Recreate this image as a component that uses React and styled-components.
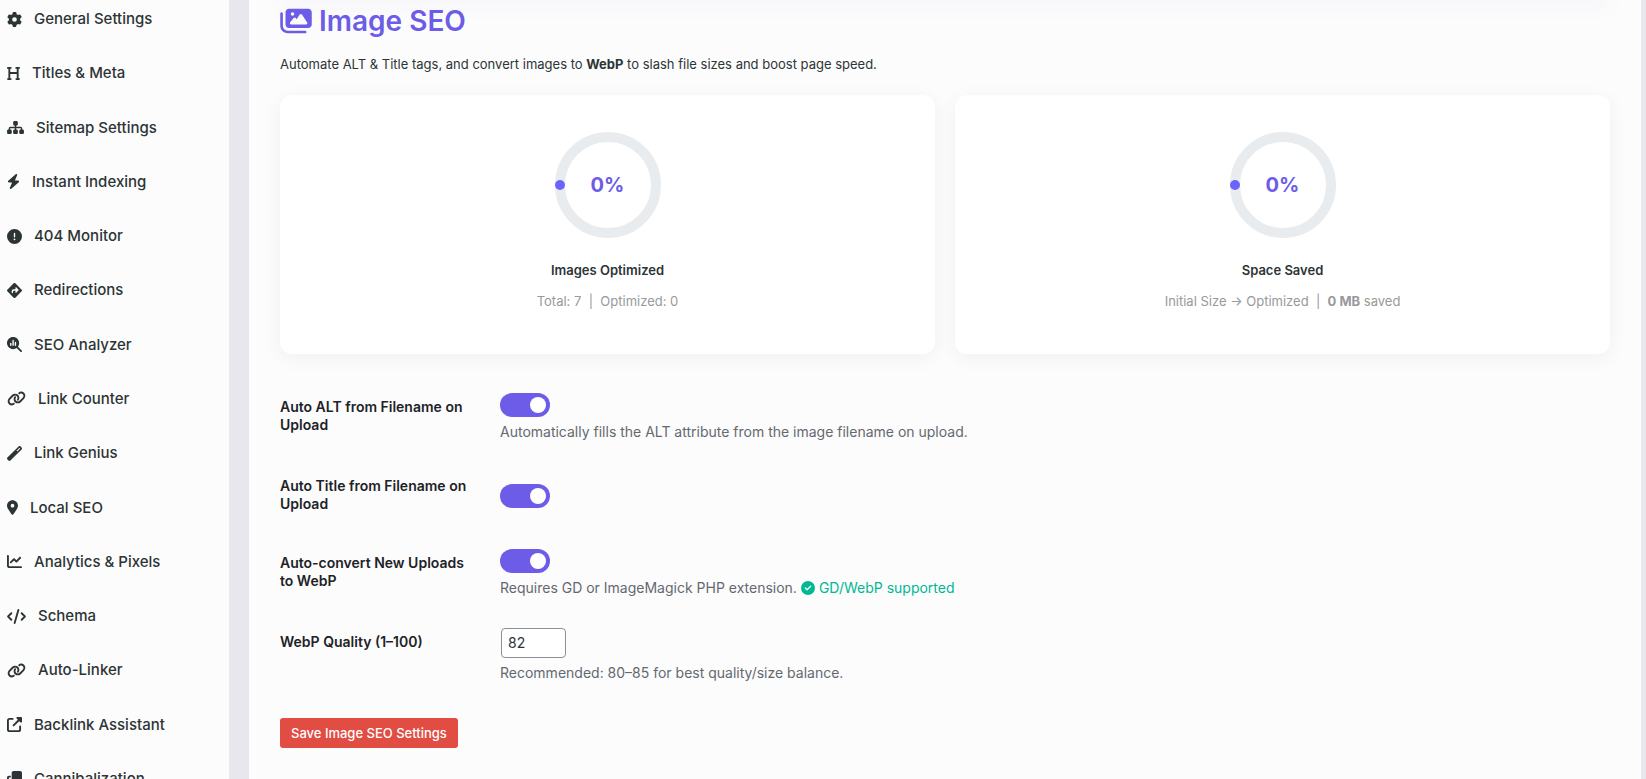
import { useState } from "react";
import styled, { createGlobalStyle } from "styled-components";
import {
    FaBolt,
    FaChartLine,
    FaCircleCheck,
    FaCircleExclamation,
    FaClone,
    FaCode,
    FaDiamondTurnRight,
    FaGear,
    FaHeading,
    FaImages,
    FaLink,
    FaLocationDot,
    FaMagnifyingGlassChart,
    FaSitemap,
    FaUpRightFromSquare,
    FaWandMagic,
} from "react-icons/fa6";

const GlobalStyle = createGlobalStyle`
    *, *::before, *::after {
        box-sizing: border-box;
    }

    body {
        margin: 0;
        background-color: #e8e7ed;
        color: #2d3436;
        font-family: Inter, "Liberation Sans", sans-serif;
        font-size: 13px;
        line-height: 20px;
        -webkit-font-smoothing: antialiased;
    }
`;

const Viewport = styled.div`
    height: 100vh;
    overflow: hidden;
`;

const Page = styled.div`
    display: flex;
    gap: 20px;
    margin-top: -8px;
    padding-right: 5px;
`;

const Sidebar = styled.nav`
    flex: 0 0 229px;
    background-color: #fcfcfc;
`;

const NavList = styled.ul`
    display: flex;
    flex-direction: column;
    min-height: 814px;
    margin: 0;
    padding: 0;
    list-style: none;
`;

const NavItem = styled.li`
    flex: 1;
    display: flex;
`;

const NavLink = styled.a`
    flex: 1;
    display: flex;
    align-items: center;
    gap: 12px;
    padding: 0 7px;
    color: #2d3436;
    font-size: 15px;
    font-weight: 500;
    text-decoration: none;

    svg {
        width: ${({ $iconWidth }) => $iconWidth || 15}px;
        height: 15px;
    }
`;

const Main = styled.main`
    flex: 1;
    min-width: 0;
    padding: 0 31px;
    background-color: #fcfcfc;
`;

const TopPanel = styled.div`
    height: 8px;
    margin-bottom: 3px;
    background-color: #fff;
    box-shadow: 0 4px 20px rgba(108, 92, 231, 0.08);
`;

const Title = styled.h1`
    display: flex;
    align-items: center;
    gap: 7px;
    margin: 0 0 15px;
    color: #6c5ce7;
    font-size: 28px;
    font-weight: 600;
    line-height: 36px;

    svg {
        width: 32px;
        height: 28px;
    }
`;

const Intro = styled.p`
    margin: 0 0 21px;
`;

const Cards = styled.div`
    display: grid;
    grid-template-columns: 1fr 1fr;
    gap: 20px;
    margin-bottom: 24px;
`;

const Card = styled.section`
    display: flex;
    flex-direction: column;
    align-items: center;
    padding: 30px;
    border-radius: 12px;
    background-color: #fff;
    box-shadow: 0 4px 20px rgba(0, 0, 0, 0.05);

    h2 {
        margin: 15px 0 11px;
        font-size: 13px;
        font-weight: 600;
    }

    p {
        margin: 0 0 13px;
        color: #999;
        white-space: pre;
    }
`;

const RingBox = styled.div`
    display: grid;
    place-items: center;
    width: 120px;
    height: 120px;

    > * {
        grid-area: 1 / 1;
    }
`;

const RingValue = styled.span`
    color: #6c5ce7;
    font-size: 20px;
    font-weight: 700;
`;

const SettingRow = styled.div`
    display: grid;
    grid-template-columns: 200px 1fr;
    gap: 20px;
    min-height: 77px;
`;

const SettingLabel = styled.label`
    padding: 20px 0;
    color: #1d2327;
    font-size: 14px;
    font-weight: 600;
    line-height: 18px;
`;

const Field = styled.div`
    align-self: center;
    padding: 15px 0;
`;

const Hint = styled.p`
    display: flex;
    align-items: center;
    gap: 4px;
    margin: 4px 0 0;
    color: #646970;
    font-size: 14px;
    line-height: 21px;
`;

const Supported = styled.span`
    display: flex;
    align-items: center;
    gap: 4px;
    color: #00b894;
`;

const Toggle = styled.input.attrs({ type: "checkbox", role: "switch" })`
    appearance: none;
    display: flex;
    align-items: center;
    width: 50px;
    height: 24px;
    margin: 0;
    padding: 4px;
    border-radius: 12px;
    background-color: #ccc;
    cursor: pointer;

    &::before {
        content: "";
        width: 16px;
        height: 16px;
        border-radius: 50%;
        background-color: #fff;
    }

    &:checked {
        justify-content: flex-end;
        background-color: #6c5ce7;
    }
`;

const NumberInput = styled.input.attrs({ type: "number", min: 1, max: 100 })`
    display: block;
    width: 65px;
    height: 30px;
    margin: 0 1px;
    padding: 0 6px 2px;
    border: 1px solid #8c8f94;
    border-radius: 4px;
    background-color: #fff;
    color: #2c3338;
    font-family: inherit;
    font-size: 14px;
`;

const SaveButton = styled.button`
    height: 30px;
    margin: 20px 0 40px;
    padding: 0 11px;
    border: none;
    border-radius: 3px;
    background-color: #e14d43;
    color: #fff;
    font-family: inherit;
    font-size: 13px;
    font-weight: 500;
    cursor: pointer;
`;

const navItems = [
    { label: "General Settings", Icon: FaGear },
    { label: "Titles & Meta", Icon: FaHeading, iconWidth: 13 },
    { label: "Sitemap Settings", Icon: FaSitemap, iconWidth: 17 },
    { label: "Instant Indexing", Icon: FaBolt, iconWidth: 13 },
    { label: "404 Monitor", Icon: FaCircleExclamation },
    { label: "Redirections", Icon: FaDiamondTurnRight },
    { label: "SEO Analyzer", Icon: FaMagnifyingGlassChart },
    { label: "Link Counter", Icon: FaLink, iconWidth: 19 },
    { label: "Link Genius", Icon: FaWandMagic },
    { label: "Local SEO", Icon: FaLocationDot, iconWidth: 11 },
    { label: "Analytics & Pixels", Icon: FaChartLine },
    { label: "Schema", Icon: FaCode, iconWidth: 19 },
    { label: "Auto-Linker", Icon: FaLink, iconWidth: 19 },
    { label: "Backlink Assistant", Icon: FaUpRightFromSquare },
    { label: "Cannibalization", Icon: FaClone },
];

function Ring({ value }) {
    return (
        <RingBox>
            <svg width="120" height="120" viewBox="0 0 120 120" aria-hidden="true">
                <circle cx="60" cy="60" r="48" fill="none" stroke="#e9ecef" strokeWidth="10" />
                {/* the arc starts at nine o'clock, at 0% only its round cap shows */}
                <circle
                    cx="60"
                    cy="60"
                    r="48"
                    fill="none"
                    stroke="#6c63ff"
                    strokeWidth="10"
                    strokeLinecap="round"
                    pathLength="100"
                    strokeDasharray={`${value} 100`}
                    transform="rotate(180 60 60)"
                />
            </svg>
            <RingValue>{value}%</RingValue>
        </RingBox>
    );
}

export default function App() {
    const [autoAlt, setAutoAlt] = useState(true);
    const [autoTitle, setAutoTitle] = useState(true);
    const [autoConvert, setAutoConvert] = useState(true);
    const [quality, setQuality] = useState(82);

    return (
        <Viewport>
            <GlobalStyle />
            <Page>
                <Sidebar>
                    <NavList>
                        {navItems.map(({ label, Icon, iconWidth }) => (
                            <NavItem key={label}>
                                <NavLink href="#" $iconWidth={iconWidth}>
                                    <Icon />
                                    {label}
                                </NavLink>
                            </NavItem>
                        ))}
                    </NavList>
                </Sidebar>
                <Main>
                    <TopPanel />
                    <Title>
                        <FaImages />
                        Image SEO
                    </Title>
                    <Intro>
                        Automate ALT & Title tags, and convert images to <strong>WebP</strong> to slash file
                        sizes and boost page speed.
                    </Intro>
                    <Cards>
                        <Card>
                            <Ring value={0} />
                            <h2>Images Optimized</h2>
                            <p>{"Total: 7 \u00a0|\u00a0 Optimized: 0"}</p>
                        </Card>
                        <Card>
                            <Ring value={0} />
                            <h2>Space Saved</h2>
                            <p>
                                {"Initial Size → Optimized \u00a0|\u00a0 "}
                                <strong>0 MB</strong> saved
                            </p>
                        </Card>
                    </Cards>
                    <form onSubmit={(e) => e.preventDefault()}>
                        <SettingRow>
                            <SettingLabel htmlFor="auto-alt">Auto ALT from Filename on Upload</SettingLabel>
                            <Field>
                                <Toggle
                                    id="auto-alt"
                                    checked={autoAlt}
                                    onChange={(e) => setAutoAlt(e.target.checked)}
                                />
                                <Hint>Automatically fills the ALT attribute from the image filename on upload.</Hint>
                            </Field>
                        </SettingRow>
                        <SettingRow>
                            <SettingLabel htmlFor="auto-title">Auto Title from Filename on Upload</SettingLabel>
                            <Field>
                                <Toggle
                                    id="auto-title"
                                    checked={autoTitle}
                                    onChange={(e) => setAutoTitle(e.target.checked)}
                                />
                            </Field>
                        </SettingRow>
                        <SettingRow>
                            <SettingLabel htmlFor="auto-convert">Auto-convert New Uploads to WebP</SettingLabel>
                            <Field>
                                <Toggle
                                    id="auto-convert"
                                    checked={autoConvert}
                                    onChange={(e) => setAutoConvert(e.target.checked)}
                                />
                                <Hint>
                                    Requires GD or ImageMagick PHP extension.
                                    <Supported>
                                        <FaCircleCheck />
                                        GD/WebP supported
                                    </Supported>
                                </Hint>
                            </Field>
                        </SettingRow>
                        <SettingRow>
                            <SettingLabel htmlFor="quality">WebP Quality (1–100)</SettingLabel>
                            <Field>
                                <NumberInput
                                    id="quality"
                                    value={quality}
                                    onChange={(e) => setQuality(e.target.value)}
                                />
                                <Hint>Recommended: 80–85 for best quality/size balance.</Hint>
                            </Field>
                        </SettingRow>
                        <SaveButton type="submit">Save Image SEO Settings</SaveButton>
                    </form>
                </Main>
            </Page>
        </Viewport>
    );
}
